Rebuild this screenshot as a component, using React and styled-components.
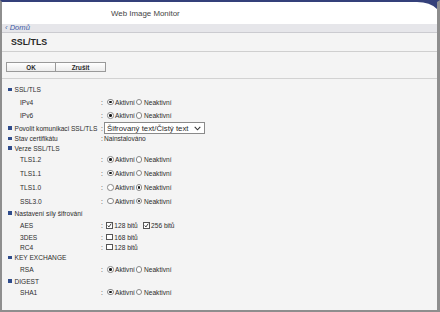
import styled, { createGlobalStyle } from "styled-components";

const Global = createGlobalStyle`
  html, body { margin: 0; padding: 0; background: #fff; }
  body { font-family: "Liberation Sans", Arial, sans-serif; color: #2c2c2c; }
`;

const Frame = styled.div`
  position: relative;
  width: 440px;
  height: 312px;
  box-sizing: border-box;
  border-top: 2px solid #34407a;
  border-left: 2px solid #8e8e8e;
  border-right: 3px solid #8e8e8e;
  border-bottom: 2px solid #8e8e8e;
  background: #f4f4f4;
  display: flex;
  flex-direction: column;
  overflow: hidden;
`;

const Corner = styled.svg`
  position: absolute;
  top: 0;
  right: 0;
`;

const Header = styled.header`
  height: 22px;
  background: #fff;
  display: flex;
  align-items: center;
  padding-left: 109px;
  font-size: 7.9px;
  color: #444;
`;

const Crumbs = styled.nav`
  height: 8px;
  background: #e6e6ea;
  border-bottom: 1px solid #cbcbd0;
  display: flex;
  align-items: center;
  padding-left: 3px;
  font-size: 7.6px;
  line-height: 1;
  font-style: italic;
  color: #3c5ca8;
`;

const TitleBar = styled.div`
  height: 18px;
  border-bottom: 1px solid #cfcfcf;
  display: flex;
  align-items: center;
  padding-left: 9px;
  font-size: 8.8px;
  font-weight: bold;
  color: #262626;
`;

const ButtonBar = styled.div`
  height: 27px;
  border-bottom: 1px solid #d2d2d2;
  display: flex;
  align-items: flex-start;
  padding: 10px 0 0 4px;
  box-sizing: border-box;
`;

const Button = styled.button`
  width: 50px;
  height: 10px;
  padding: 0;
  margin: 0;
  border: 1px solid #9a9a9a;
  background: linear-gradient(#ffffff, #ececec);
  font-family: inherit;
  font-size: 6.3px;
  font-weight: bold;
  color: #2a2a2a;
  display: flex;
  align-items: center;
  justify-content: center;
  & + & { border-left: none; }
`;

const Content = styled.div`
  padding-top: 5px;
  display: flex;
  flex-direction: column;
  font-size: 6.6px;
`;

const Row = styled.div`
  height: ${(p) => p.$h}px;
  display: flex;
  align-items: center;
`;

const Label = styled.div`
  width: ${(p) => (p.$sub ? 81 : 93)}px;
  padding-left: ${(p) => (p.$sub ? 18 : 6)}px;
  display: flex;
  align-items: center;
  gap: 3px;
  white-space: nowrap;
`;

const Bullet = styled.span`
  width: 3.5px;
  height: 3.5px;
  background: #2f4c8c;
  flex: none;
`;

const Colon = styled.span`
  width: 5px;
  flex: none;
`;

const Value = styled.div`
  display: flex;
  align-items: center;
  gap: ${(p) => p.$gap || 0}px;
  margin-left: ${(p) => p.$ml || 0}px;
  white-space: nowrap;
`;

const Opt = styled.span`
  display: inline-flex;
  align-items: center;
  gap: 1.5px;
`;

const RadioDot = styled.span`
  width: 4.6px;
  height: 4.6px;
  border-radius: 50%;
  border: 0.8px solid #888;
  background: #fff;
  display: inline-flex;
  align-items: center;
  justify-content: center;
  flex: none;
  &::after {
    content: "";
    width: 2.5px;
    height: 2.5px;
    border-radius: 50%;
    background: ${(p) => (p.$on ? "#1a1a1a" : "transparent")};
  }
`;

const Box = styled.span`
  width: 4.8px;
  height: 4.8px;
  border: 0.8px solid #555;
  background: #fff;
  display: inline-flex;
  align-items: center;
  justify-content: center;
  flex: none;
`;

const Select = styled.div`
  width: 94px;
  height: 10px;
  border: 1px solid #8a8a8a;
  background: #fff;
  display: flex;
  align-items: center;
  justify-content: space-between;
  padding: 0 3px 0 2px;
  font-size: 7.8px;
  color: #2a2a2a;
  margin-left: -2px;
`;

function Radio({ on }) {
  return (
    <Value $ml={1} $gap={1}>
      <Opt><RadioDot $on={on === 0} />Aktivní</Opt>
      <Opt><RadioDot $on={on === 1} />Neaktivní</Opt>
    </Value>
  );
}

function Check({ items }) {
  return (
    <Value $gap={5}>
      {items.map(([text, on]) => (
        <Opt key={text}>
          <Box>
            {on && (
              <svg width="5" height="5" viewBox="0 0 10 10">
                <path d="M1.5 5 L4 8 L8.8 1.2" fill="none" stroke="#222" strokeWidth="1.8" />
              </svg>
            )}
          </Box>
          {text}
        </Opt>
      ))}
    </Value>
  );
}

function Head({ h, children }) {
  return (
    <Row $h={h}>
      <Label><Bullet />{children}</Label>
    </Row>
  );
}

function Sub({ h, label, children }) {
  return (
    <Row $h={h}>
      <Label $sub>{label}</Label>
      <Colon>:</Colon>
      {children}
    </Row>
  );
}

export default function App() {
  return (
    <>
      <Global />
      <Frame>
        <Corner width="20" height="7" viewBox="0 0 20 7">
          <path d="M0 0 Q13 0 20 7 L20 0 Z" fill="#34407a" />
        </Corner>
        <Header>Web Image Monitor</Header>
        <Crumbs>‹ Domů</Crumbs>
        <TitleBar>SSL/TLS</TitleBar>
        <ButtonBar>
          <Button>OK</Button>
          <Button>Zrušit</Button>
        </ButtonBar>
        <Content>
          <Head h={11}>SSL/TLS</Head>
          <Sub h={14} label="IPv4"><Radio on={0} /></Sub>
          <Sub h={13} label="IPv6"><Radio on={0} /></Sub>
          <Row $h={12}>
            <Label><Bullet />Povolit komunikaci SSL/TLS</Label>
            <Colon>:</Colon>
            <Select>
              <span>Šifrovaný text/Čistý text</span>
              <svg width="7" height="5" viewBox="0 0 7 5">
                <path d="M0.7 0.8 L3.5 3.8 L6.3 0.8" fill="none" stroke="#333" strokeWidth="1.1" />
              </svg>
            </Select>
          </Row>
          <Row $h={9}>
            <Label><Bullet />Stav certifikátu</Label>
            <Colon>:</Colon>
            <Value $ml={-2}>Nainstalováno</Value>
          </Row>
          <Head h={10}>Verze SSL/TLS</Head>
          <Sub h={13} label="TLS1.2"><Radio on={0} /></Sub>
          <Sub h={14} label="TLS1.1"><Radio on={0} /></Sub>
          <Sub h={15} label="TLS1.0"><Radio on={1} /></Sub>
          <Sub h={12} label="SSL3.0"><Radio on={1} /></Sub>
          <Head h={12}>Nastavení síly šifrování</Head>
          <Sub h={13} label="AES"><Check items={[["128 bitů", true], ["256 bitů", true]]} /></Sub>
          <Sub h={10} label="3DES"><Check items={[["168 bitů", false]]} /></Sub>
          <Sub h={10} label="RC4"><Check items={[["128 bitů", false]]} /></Sub>
          <Head h={11}>KEY EXCHANGE</Head>
          <Sub h={13} label="RSA"><Radio on={0} /></Sub>
          <Head h={10}>DIGEST</Head>
          <Sub h={12} label="SHA1"><Radio on={0} /></Sub>
        </Content>
      </Frame>
    </>
  );
}
